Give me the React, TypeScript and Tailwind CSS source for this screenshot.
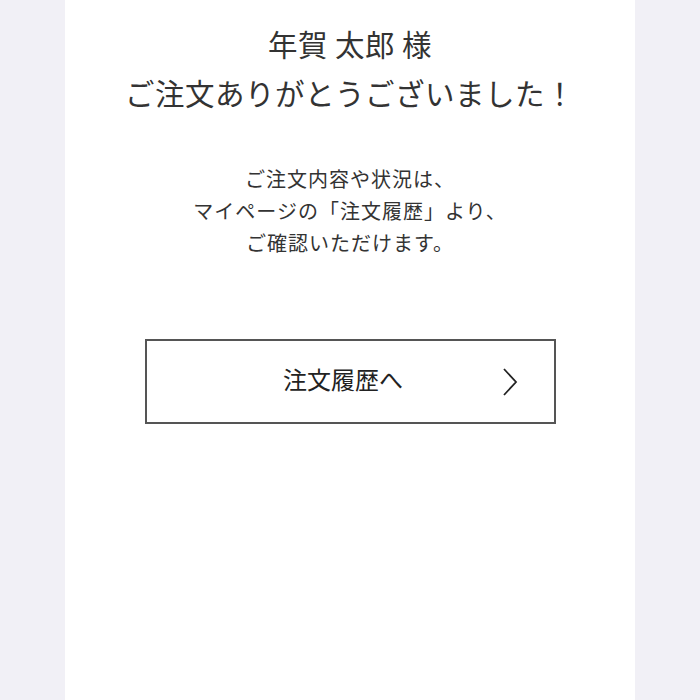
import React from "react";

export default function App() {
  return (
    <div
      className="min-h-[700px] w-full bg-[#f1f0f6] flex justify-center"
      style={{ fontFamily: '"Noto Sans CJK JP", "Noto Sans", sans-serif' }}
    >
      <div className="w-[570px] min-h-[700px] bg-white flex flex-col items-center text-[#333333]">
        <h1 className="mt-[19px] text-[29.5px] leading-[49px] tracking-[0.5px] font-normal text-center">
          <span className="block">年賀&nbsp;太郎&nbsp;様</span>
          <span className="block">ご注文ありがとうございました！</span>
        </h1>
        <p className="mt-[46px] text-[20px] leading-[32px] tracking-[1px] text-center">
          ご注文内容や状況は、
          <br />
          マイページの「注文履歴」より、
          <br />
          ご確認いただけます。
        </p>
        <a
          href="#"
          className="mt-[80px] w-[411px] h-[85px] border-2 border-[#555555] flex items-center justify-center pr-[14px] pb-[5px] relative text-[24px] text-[#222222]"
        >
          <span>注文履歴へ</span>
          <svg
            className="absolute right-[36px] top-1/2 -translate-y-1/2"
            width="16"
            height="30"
            viewBox="0 0 16 30"
            fill="none"
          >
            <path d="M2 2 L14 15 L2 28" stroke="#222" strokeWidth="1.8" />
          </svg>
        </a>
      </div>
    </div>
  );
}
